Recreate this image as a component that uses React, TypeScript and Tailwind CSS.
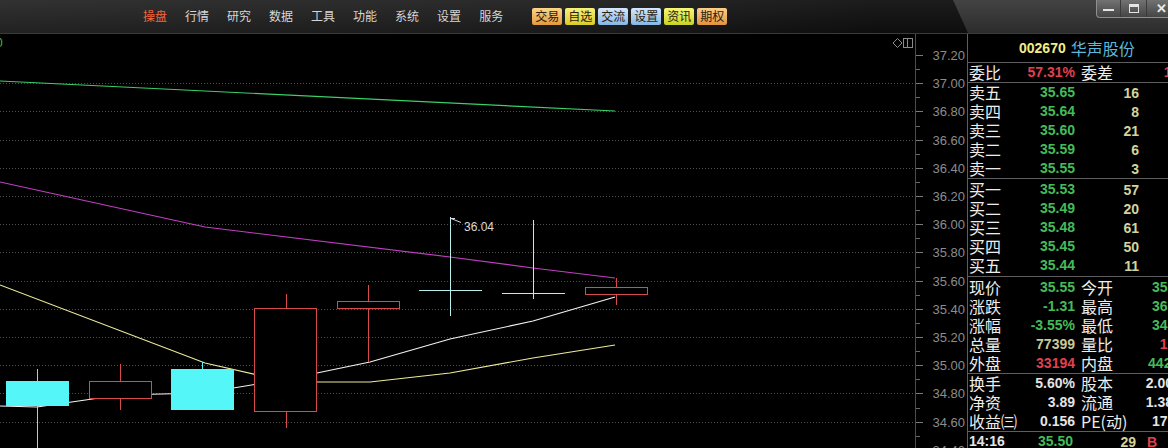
import React from 'react';

const menu = ['操盘', '行情', '研究', '数据', '工具', '功能', '系统', '设置', '服务'];

const quick = [
  { t: '交易', c: 'bg-[linear-gradient(to_bottom,#fbd68a,#e39a3e)]' },
  { t: '自选', c: 'bg-[linear-gradient(to_bottom,#f8f27a,#d9cb28)]' },
  { t: '交流', c: 'bg-[linear-gradient(to_bottom,#d4e8fb,#86b6e4)]' },
  { t: '设置', c: 'bg-[linear-gradient(to_bottom,#d4e8fb,#86b6e4)]' },
  { t: '资讯', c: 'bg-[linear-gradient(to_bottom,#f6f87a,#c9d226)]' },
  { t: '期权', c: 'bg-[linear-gradient(to_bottom,#fbd08a,#e0943e)]' },
];

const GREEN = 'text-[#45bb58]';
const RED = 'text-[#e2404f]';
const KHAKI = 'text-[#d3d39c]';
const WHITE = 'text-[#e4e4e4]';

const asks = [
  ['卖五', '35.65', '16'],
  ['卖四', '35.64', '8'],
  ['卖三', '35.60', '21'],
  ['卖二', '35.59', '6'],
  ['卖一', '35.55', '3'],
];
const bids = [
  ['买一', '35.53', '57'],
  ['买二', '35.49', '20'],
  ['买三', '35.48', '61'],
  ['买四', '35.45', '50'],
  ['买五', '35.44', '11'],
];

type Pair = { l1: string; v1: string; c1: string; l2: string; v2: string; c2: string };

const quote: Pair[] = [
  { l1: '现价', v1: '35.55', c1: GREEN, l2: '今开', v2: '35.55', c2: GREEN },
  { l1: '涨跌', v1: '-1.31', c1: GREEN, l2: '最高', v2: '36.04', c2: GREEN },
  { l1: '涨幅', v1: '-3.55%', c1: GREEN, l2: '最低', v2: '34.88', c2: GREEN },
  { l1: '总量', v1: '77399', c1: 'text-[#c9c998]', l2: '量比', v2: '1.21', c2: RED },
  { l1: '外盘', v1: '33194', c1: RED, l2: '内盘', v2: '44205', c2: GREEN },
];
const fin: Pair[] = [
  { l1: '换手', v1: '5.60%', c1: WHITE, l2: '股本', v2: '2.00亿', c2: WHITE },
  { l1: '净资', v1: '3.89', c1: WHITE, l2: '流通', v2: '1.38亿', c2: WHITE },
  { l1: '收益㈢', v1: '0.156', c1: WHITE, l2: 'PE(动)', v2: '17.56', c2: WHITE },
];

const Label = ({ children }: { children: React.ReactNode }) => (
  <span className="text-[16px] leading-[19px] text-[#ededed] font-['Noto_Sans_CJK_SC',sans-serif]">{children}</span>
);

const Num = ({ children, c }: { children: React.ReactNode; c: string }) => (
  <span className={`text-[14px] leading-[19px] font-bold font-['Liberation_Sans','Noto_Sans_CJK_SC',sans-serif] ${c}`}>{children}</span>
);

const PairRow = ({ r }: { r: Pair }) => (
  <div className="flex h-[19px] items-center leading-[19px]">
    <div className="flex w-[107px] shrink-0 items-center justify-between pl-[1px]">
      <Label>{r.l1}</Label>
      <Num c={r.c1}>{r.v1}</Num>
    </div>
    <div className="flex w-[112px] shrink-0 items-center justify-between pl-[6px]">
      <Label>{r.l2}</Label>
      <Num c={r.c2}>{r.v2}</Num>
    </div>
  </div>
);

const BookRow = ({ r }: { r: string[] }) => (
  <div className="flex h-[19px] items-center leading-[19px]">
    <div className="flex w-[107px] shrink-0 items-center justify-between pl-[1px]">
      <Label>{r[0]}</Label>
      <Num c={GREEN}>{r[1]}</Num>
    </div>
    <div className="w-[64px] shrink-0 text-right">
      <Num c={KHAKI}>{r[2]}</Num>
    </div>
  </div>
);

const gridY = Array.from({ length: 15 }, (_, i) => 55 + i * 28.2);
const labels = ['37.20', '37.00', '36.80', '36.60', '36.40', '36.20', '36.00', '35.80', '35.60', '35.40', '35.20', '35.00', '34.80', '34.60', '34.40'];

const RED_C = '#d94a4a';
const CYAN = '#54f6f8';
const CROSS = '#b8eeee';

function Chart() {
  return (
    <svg width={915} height={414} viewBox="0 34 915 414" className="block">
      {gridY.slice(1).map((y, i) => (
        <line key={i} x1={0} x2={915} y1={Math.round(y) + 0.5} y2={Math.round(y) + 0.5} stroke="#4e4e4e" strokeDasharray="1 2" />
      ))}
      <text x={-4} y={47} fill="#3fbf4f" fontSize={12} fontFamily="Liberation Sans">0</text>
      {/* top-right glyphs */}
      <path d="M897.5 38.5 L902 43 L897.5 47.5 L893 43 Z" fill="none" stroke="#8a8a8a" />
      <rect x={903.5} y={38.5} width={9} height={9} fill="none" stroke="#8a8a8a" />
      <line x1={907.5} x2={907.5} y1={39} y2={47} stroke="#8a8a8a" />

      {/* moving averages */}
      <polyline points="0,81 615,111" fill="none" stroke="#3ccf6a" strokeWidth={1.2} />
      <polyline points="0,182 205,227 450,257 533,268 615,278" fill="none" stroke="#c43ec4" strokeWidth={1.2} />
      <polyline points="0,285 205,363 288,382 370,382 450,373 533,358 615,345" fill="none" stroke="#ecec9a" strokeWidth={1.1} />
      <polyline points="0,406 37,407 120,395 203,393 288,379 370,362 450,339 533,321 615,297" fill="none" stroke="#f4f4f4" strokeWidth={1.1} />

      {/* candles */}
      <line x1={37.5} x2={37.5} y1={369} y2={448} stroke={CYAN} />
      <rect x={6} y={381} width={63} height={25} fill={CYAN} />

      <line x1={120.5} x2={120.5} y1={364} y2={410} stroke={RED_C} />
      <rect x={89.5} y={381.5} width={62} height={17} fill="#000" stroke={RED_C} />

      <line x1={202.5} x2={202.5} y1={362} y2={372} stroke={CYAN} />
      <rect x={171} y={369} width={63} height={41} fill={CYAN} />

      <line x1={286.5} x2={286.5} y1={294} y2={428} stroke={RED_C} />
      <rect x={254.5} y={308.5} width={62} height={103} fill="#000" stroke={RED_C} />

      <line x1={368.5} x2={368.5} y1={285} y2={362} stroke={RED_C} />
      <rect x={337.5} y={301.5} width={62} height={7} fill="#000" stroke={RED_C} />

      <line x1={450.5} x2={450.5} y1={217} y2={316} stroke={CROSS} />
      <line x1={419} x2={482} y1={290.5} y2={290.5} stroke={CROSS} />
      <polyline points="455,218.5 451,218.5 461,222.5" fill="none" stroke="#d8d8d8" />
      <text x={464} y={231} fill="#dadada" fontSize={12} fontFamily="Liberation Sans">36.04</text>

      <line x1={533.5} x2={533.5} y1={220} y2={299} stroke={CROSS} />
      <line x1={502} x2={565} y1={293.5} y2={293.5} stroke={CROSS} />

      <line x1={616.5} x2={616.5} y1={278} y2={305} stroke={RED_C} />
      <rect x={585.5} y={287.5} width={62} height={7} fill="#000" stroke={RED_C} />
    </svg>
  );
}

function Axis() {
  return (
    <svg width={51} height={414} viewBox="916 34 51 414" className="block">
      {gridY.map((y, i) => (
        <g key={i}>
          <line x1={916} x2={923} y1={Math.round(y) + 0.5} y2={Math.round(y) + 0.5} stroke="#7a7a7a" />
          <line x1={916} x2={920} y1={Math.round(y + 14.1) + 0.5} y2={Math.round(y + 14.1) + 0.5} stroke="#6a6a6a" />
          <text x={965} y={y + 5} textAnchor="end" fill="#8c8c8c" fontSize={13} fontFamily="Liberation Sans">
            {labels[i]}
          </text>
        </g>
      ))}
    </svg>
  );
}

export default function App() {
  return (
    <div className="h-[448px] w-[1168px] overflow-hidden bg-black font-['Liberation_Sans','Noto_Sans_CJK_SC',sans-serif]">
      {/* top bar */}
      <div className="relative flex h-[34px] items-center border-b border-[#3a3a3a] bg-[linear-gradient(to_bottom,rgba(255,255,255,0.05),rgba(0,0,0,0.15)),linear-gradient(to_right,#272727,#1f1f1f_45%,#101010_75%)]">
        <div className="ml-[143px] flex gap-[18px] text-[12px] leading-none">
          {menu.map((m, i) => (
            <span key={m} className={i === 0 ? 'text-[#f2663c]' : 'text-[#d6d6d6]'}>
              {m}
            </span>
          ))}
        </div>
        <div className="ml-[29px] flex gap-[3px]">
          {quick.map(q => (
            <div
              key={q.t}
              className={`flex h-[17px] w-[30px] items-center justify-center rounded-[2px] text-[12px] leading-none text-[#2a2010] ${q.c}`}
            >
              {q.t}
            </div>
          ))}
        </div>
        {/* slanted lighter panel */}
        <div className="absolute left-[953px] top-0 h-[33px] w-[215px] bg-[linear-gradient(to_bottom,#434343,#2c2c2c)] [clip-path:polygon(0_0,100%_0,100%_100%,15px_100%)]" />
        {/* window controls */}
        <div className="absolute right-0 top-0 flex h-[18px] w-[72px] rounded-bl-[4px] border-b border-l border-[#8e8e8e] bg-[linear-gradient(to_bottom,#727272,#454545)]">
          <div className="flex w-[24px] items-end justify-center border-r border-[#3a3a3a] pb-[6px]">
            <div className="h-[2px] w-[11px] bg-[#e4e4e4]" />
          </div>
          <div className="flex w-[26px] items-center justify-center border-r border-[#3a3a3a]">
            <div className="h-[9px] w-[10px] border border-t-[3px] border-[#e4e4e4]" />
          </div>
          <div className="flex flex-1 items-center justify-end pr-[1px] text-[13px] font-bold leading-none text-[#e8e8e8]">✕</div>
        </div>
      </div>

      {/* main */}
      <div className="flex h-[414px]">
        <div className="w-[916px] shrink-0 border-r border-[#4c4c4c]">
          <Chart />
        </div>
        <div className="w-[52px] shrink-0 border-r border-[#5e5e5e]">
          <Axis />
        </div>
        <div className="w-[200px] shrink-0 overflow-hidden">
          <div className="flex h-[29px] items-center border-b border-[#5e5e5e] pl-[51px]">
            <span className="text-[14px] font-bold text-[#f2ee86]">002670</span>
            <span className="ml-[5px] text-[16px] leading-[20px] text-[#5cb8dc] font-['Noto_Sans_CJK_SC',sans-serif]">华声股份</span>
          </div>
          <div className="h-[20px] border-b border-[#5e5e5e]">
            <div className="flex h-[19px] items-center leading-[19px]">
              <div className="flex w-[107px] shrink-0 items-center justify-between pl-[1px]">
                <Label>委比</Label>
                <Num c={RED}>57.31%</Num>
              </div>
              <div className="flex w-[112px] shrink-0 items-center justify-between pl-[6px]">
                <Label>委差</Label>
                <Num c={RED}>124</Num>
              </div>
            </div>
          </div>
          <div className="h-[96px] border-b border-[#5e5e5e]">
            {asks.map(r => (
              <BookRow key={r[0]} r={r} />
            ))}
          </div>
          <div className="h-[98px] border-b border-[#5e5e5e] pt-[1px]">
            {bids.map(r => (
              <BookRow key={r[0]} r={r} />
            ))}
          </div>
          <div className="h-[97px] border-b border-[#5e5e5e] pt-[1px]">
            {quote.map(r => (
              <PairRow key={r.l1} r={r} />
            ))}
          </div>
          <div className="h-[58px] border-b border-[#5e5e5e]">
            {fin.map(r => (
              <PairRow key={r.l1} r={r} />
            ))}
          </div>
          <div className="flex h-[19px] items-center leading-[19px]">
            <div className="flex w-[105px] shrink-0 items-center justify-between pl-[1px]">
              <Num c={WHITE}>14:16</Num>
              <Num c={GREEN}>35.50</Num>
            </div>
            <div className="w-[63px] shrink-0 text-right">
              <Num c={KHAKI}>29</Num>
            </div>
            <div className="ml-[11px]">
              <Num c={RED}>B</Num>
            </div>
          </div>
        </div>
      </div>
    </div>
  );
}
